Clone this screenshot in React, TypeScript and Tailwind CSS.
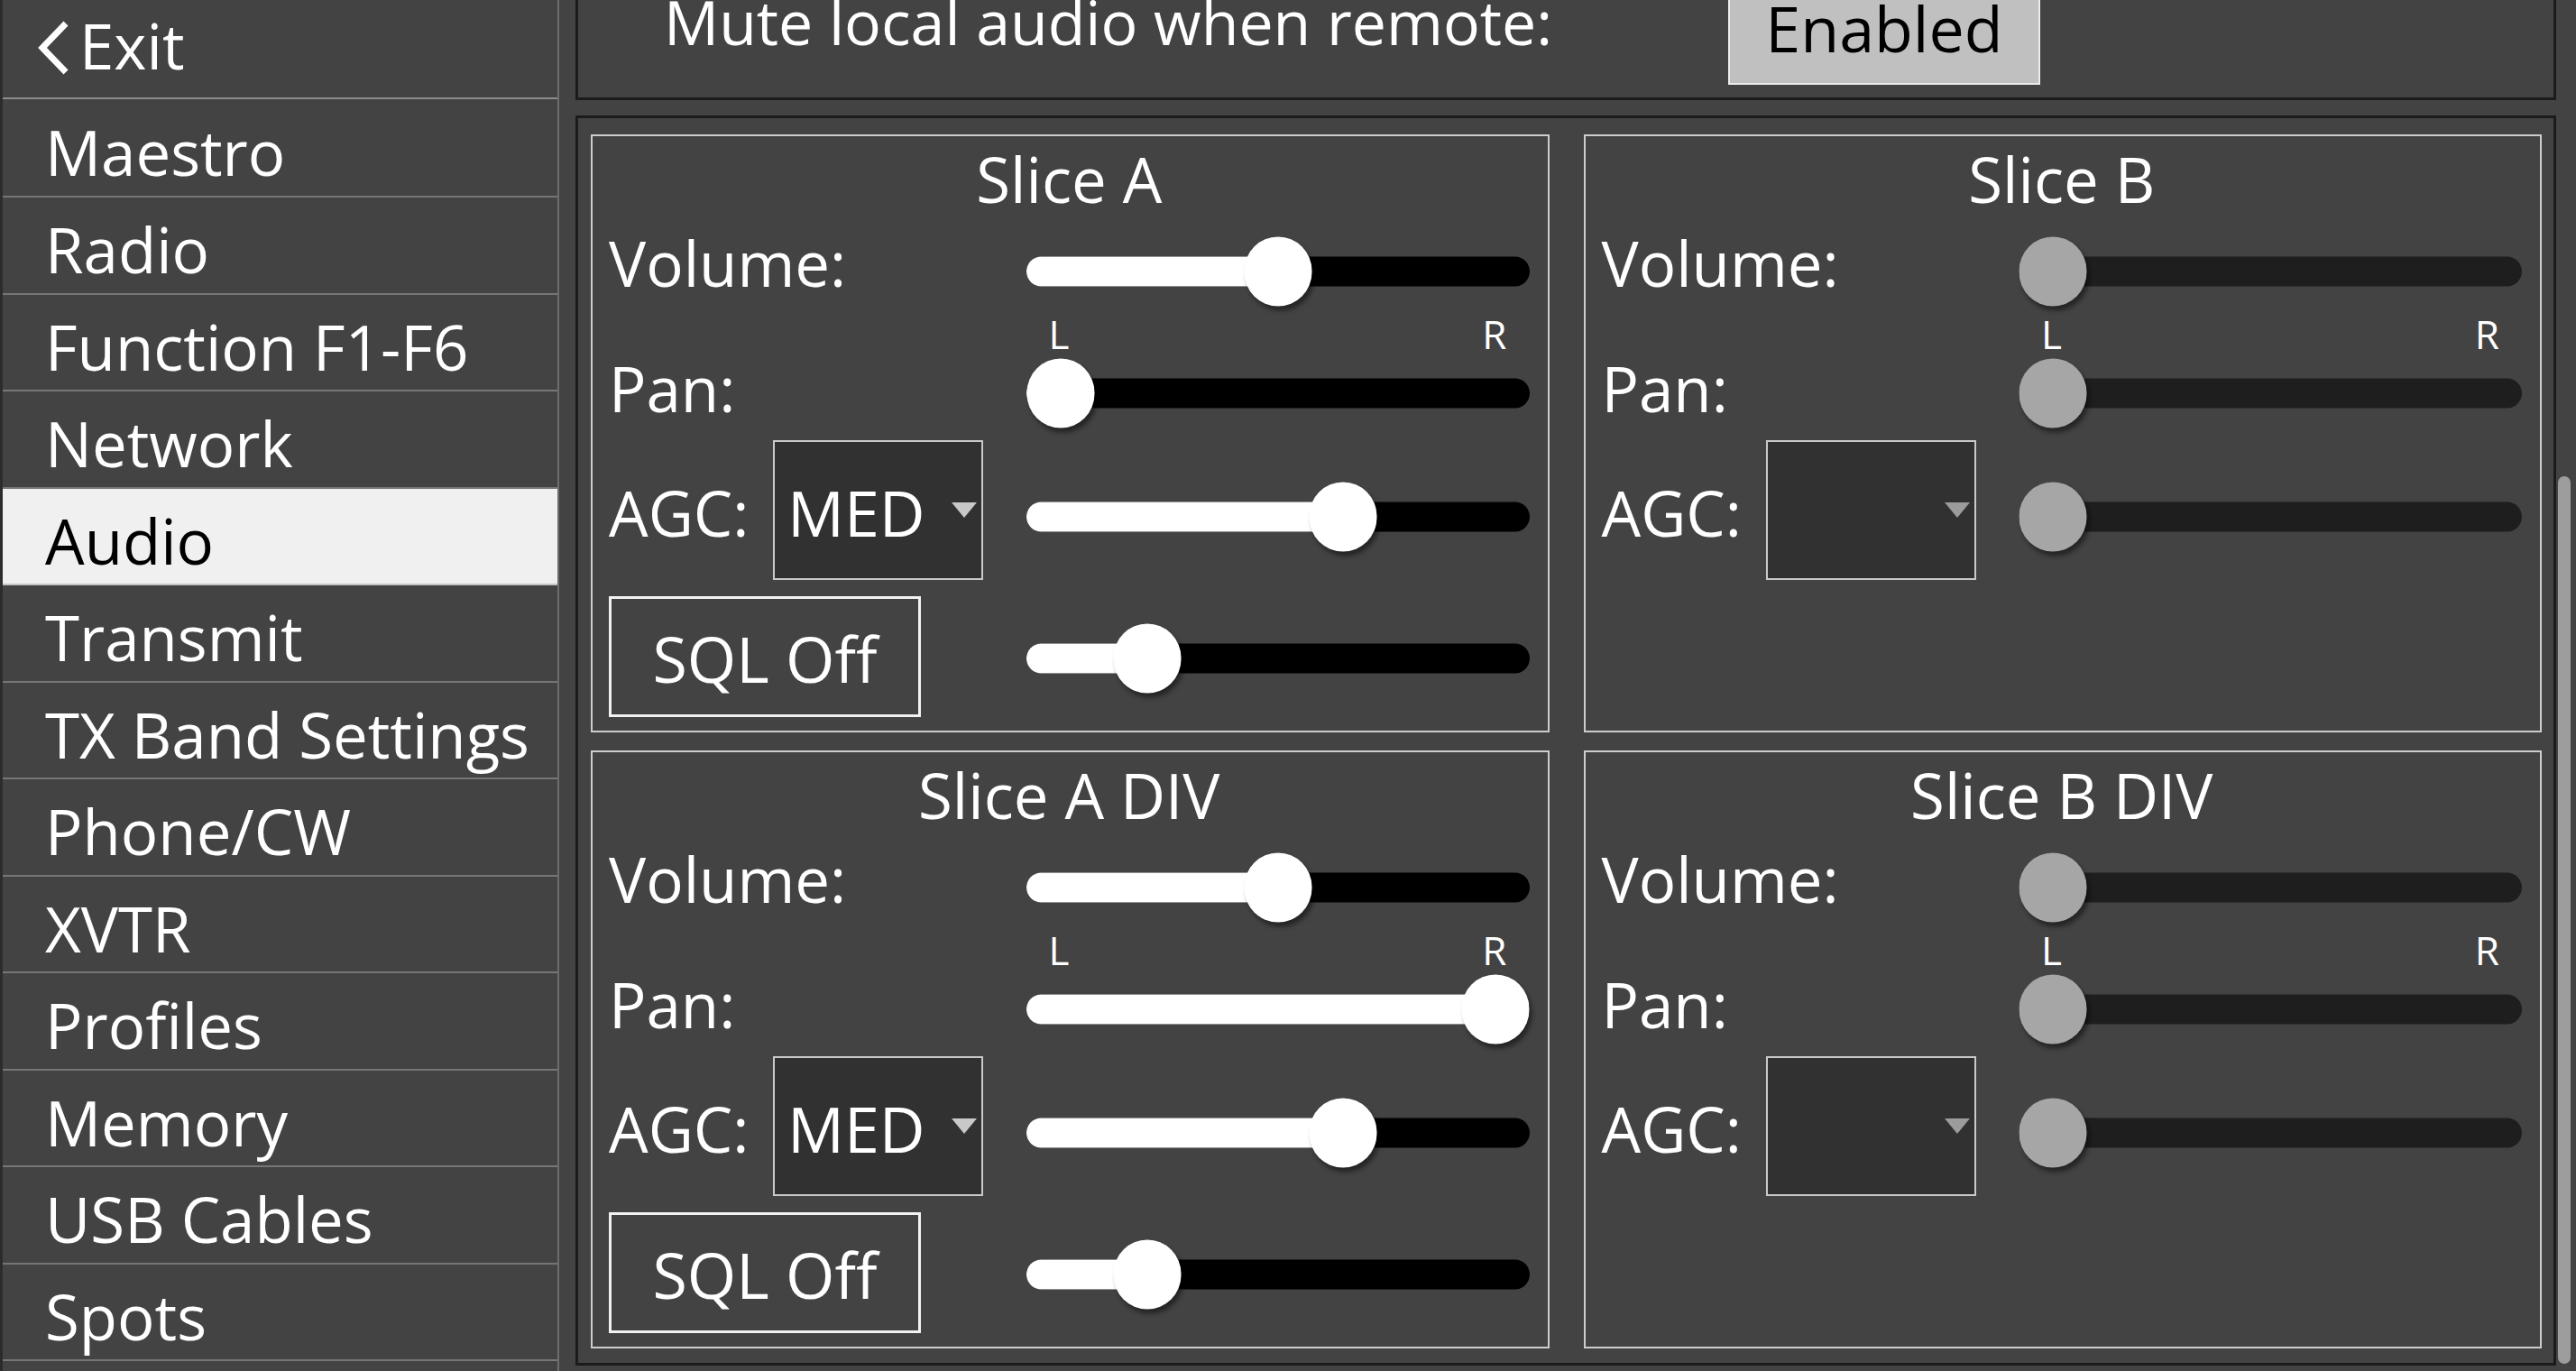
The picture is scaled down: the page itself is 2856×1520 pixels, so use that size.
import React from 'react';

const menu = [
  'Maestro',
  'Radio',
  'Function F1-F6',
  'Network',
  'Audio',
  'Transmit',
  'TX Band Settings',
  'Phone/CW',
  'XVTR',
  'Profiles',
  'Memory',
  'USB Cables',
  'Spots',
];

function Slider({ value, disabled, className }: { value: number; disabled?: boolean; className?: string }) {
  // thumb center travels from 38px to 520px on a 558px track
  const center = 38 + value * 482;
  return (
    <div className={`relative h-[80px] w-[558px] shrink-0 ${className ?? ''}`}>
      <div
        className={`absolute left-0 right-0 top-1/2 h-[33px] -translate-y-1/2 rounded-full ${
          disabled ? 'bg-[#1e1e1e]' : 'bg-black'
        }`}
      />
      {!disabled && (
        <div
          className="absolute left-0 top-1/2 h-[33px] -translate-y-1/2 rounded-full bg-white"
          style={{ width: center }}
        />
      )}
      <div
        className={`absolute top-1/2 h-[77px] w-[75px] -translate-x-1/2 -translate-y-1/2 rounded-full shadow-[3px_5px_5px_rgba(0,0,0,0.45)] ${
          disabled ? 'bg-[#a6a6a6]' : 'bg-white'
        }`}
        style={{ left: center }}
      />
    </div>
  );
}

function Dropdown({ value, disabled }: { value?: string; disabled?: boolean }) {
  return (
    <div className="flex h-[155px] w-[233px] shrink-0 items-center border-2 border-[#c9c9c9] bg-[#313131] pl-[14px] pr-[5px]">
      <span className="flex-1 pt-[5px] text-[70px] leading-none">{value}</span>
      <svg width="28" height="17" viewBox="0 0 28 17">
        <path d="M0 0H28L14 17Z" fill={disabled ? '#9c9c9c' : '#c8c8c8'} />
      </svg>
    </div>
  );
}

type SliceProps = {
  title: string;
  enabled: boolean;
  volume: number;
  pan: number;
  agc: number;
  sql?: number;
};

function SliceBox({ title, enabled, volume, pan, agc, sql }: SliceProps) {
  return (
    <section className="flex h-[663px] flex-col border-2 border-[#cdcdcd] pl-[18px] pr-[20px] pt-[12.5px]">
      <h2 className="h-[69px] text-center text-[69px] font-normal leading-none">{title}</h2>

      <div className="mt-[28.5px] flex h-[80px] items-center">
        <span className="mb-[19px] text-[69px] leading-none">Volume:</span>
        <Slider className="ml-auto" value={volume} disabled={!enabled} />
      </div>

      <div className="ml-auto mt-[7px] flex h-[44px] w-[558px] justify-between px-[25px] text-[44px] leading-none">
        <span>L</span>
        <span>R</span>
      </div>

      <div className="mt-[4px] flex h-[80px] items-center">
        <span className="mb-[12px] text-[69px] leading-none">Pan:</span>
        <Slider className="ml-auto" value={pan} disabled={!enabled} />
      </div>

      <div className="mt-[12px] flex h-[155px] items-center">
        <span className="mt-[5px] w-[182px] shrink-0 text-[69px] leading-none">AGC:</span>
        <Dropdown value={enabled ? 'MED' : undefined} disabled={!enabled} />
        <Slider className="ml-auto mt-[15px]" value={agc} disabled={!enabled} />
      </div>

      {sql !== undefined && (
        <div className="mt-[18px] flex h-[134px] items-center">
          <button className="flex h-[134px] w-[346px] shrink-0 items-center justify-center border-[3px] border-[#f2f2f2] pt-[4px] text-[70px] leading-none">
            SQL Off
          </button>
          <Slider className="ml-auto mt-[4px]" value={sql} />
        </div>
      )}
    </section>
  );
}

export default function App() {
  return (
    <div className="flex h-[1520px] w-[2856px] overflow-hidden bg-[#434343] font-['Open_Sans',sans-serif] text-white">
      {/* Menu */}
      <aside className="flex w-[620px] shrink-0 flex-col border-l-[3px] border-r-2 border-l-[#2c2c2c] border-r-[#6c6c6c]">
        <div className="flex h-[109.5px] shrink-0 items-center border-b-2 border-[#8c8c8c] pb-[6px] pl-[37px]">
          <svg width="38" height="62" viewBox="0 0 38 62" className="mt-[4px]">
            <polyline points="33,4 7,31 33,58" fill="none" stroke="white" strokeWidth="7" />
          </svg>
          <span className="ml-[10px] text-[69px] leading-none">Exit</span>
        </div>
        {menu.map((item, i) => (
          <div
            key={item}
            className={`flex shrink-0 items-center border-b-2 pl-[47px] pt-[10px] text-[69px] leading-none ${
              i === 0 ? 'h-[109.5px]' : 'h-[107.5px]'
            } ${item === 'Audio' ? 'border-[#c4c4c4] bg-[#f0f0f0] text-black' : 'border-[#767676]'}`}
          >
            {item}
          </div>
        ))}
      </aside>

      {/* Content */}
      <main className="flex min-w-0 flex-1 flex-col pl-[18px]">
        <div className="-mt-[60px] flex h-[171px] shrink-0 items-center border-[3px] border-[#1b1b1b] pl-[95px]">
          <span className="mb-[4px] w-[1180px] shrink-0 text-[68px] leading-none">Mute local audio when remote:</span>
          <button className="mt-[17px] flex h-[120px] w-[346px] shrink-0 items-center justify-center border-2 border-[#ececec] bg-[#c0c0c0] pb-[6px] text-[70px] leading-none text-black">
            Enabled
          </button>
        </div>

        <div className="mt-[17px] grid shrink-0 grid-cols-2 gap-x-[38px] gap-y-[20px] border-[3px] border-[#1b1b1b] pb-[16px] pl-[14px] pr-[13px] pt-[18px]">
          <SliceBox title="Slice A" enabled volume={0.5} pan={0} agc={0.65} sql={0.2} />
          <SliceBox title="Slice B" enabled={false} volume={0} pan={0} agc={0} />
          <SliceBox title="Slice A DIV" enabled volume={0.5} pan={1} agc={0.65} sql={0.2} />
          <SliceBox title="Slice B DIV" enabled={false} volume={0} pan={0} agc={0} />
        </div>
      </main>

      {/* Scrollbar */}
      <div className="w-[22px] shrink-0 pl-[2px] pt-[528px]">
        <div className="h-[984px] w-[14px] rounded-full bg-[#9d9d9d]" />
      </div>
    </div>
  );
}
